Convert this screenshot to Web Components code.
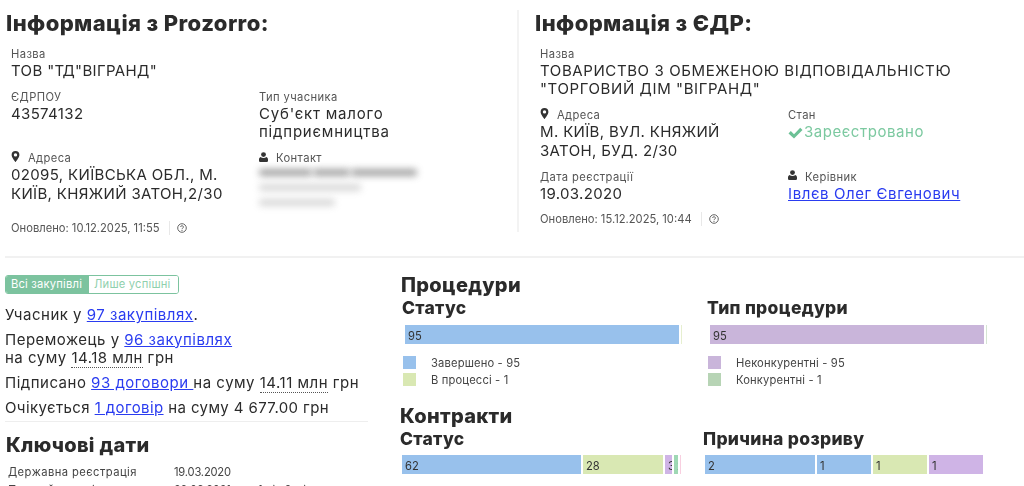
<!DOCTYPE html>
<html lang="uk"><head><meta charset="utf-8"><title>Профіль учасника</title>
<style>
html,body{margin:0;padding:0;background:#fff;height:486px;overflow:hidden}
body{font-family:Inter,"Open Sans",sans-serif;color:#2b2b2b;--ls:.35px}
</style></head><body>
<x-page>
  <x-top>
    <x-panel slot="left" title="Інформація з Prozorro:" updated="Оновлено: 10.12.2025, 11:55" gap="14">
      <x-field label="Назва" wide>ТОВ "ТД"ВІГРАНД"</x-field>
      <x-field label="ЄДРПОУ">43574132</x-field>
      <x-field label="Тип учасника" style="--ls:.8px">Суб'єкт малого підприємництва</x-field>
      <x-field label="Адреса" icon="pin">02095, КИЇВСЬКА ОБЛ., М. КИЇВ, КНЯЖИЙ ЗАТОН,2/30</x-field>
      <x-field label="Контакт" icon="user"><x-blurred></x-blurred></x-field>
    </x-panel>
    <x-panel slot="right" title="Інформація з ЄДР:" updated="Оновлено: 15.12.2025, 10:44" gap="9">
      <x-field label="Назва" wide style="--ls:.6px">ТОВАРИСТВО З ОБМЕЖЕНОЮ ВІДПОВІДАЛЬНІСТЮ "ТОРГОВИЙ ДІМ "ВІГРАНД"</x-field>
      <x-field label="Адреса" icon="pin">М. КИЇВ, ВУЛ. КНЯЖИЙ ЗАТОН, БУД. 2/30</x-field>
      <x-field label="Стан" style="--ls:.55px"><x-status>Зареєстровано</x-status></x-field>
      <x-field label="Дата реєстрації">19.03.2020</x-field>
      <x-field label="Керівник" icon="user" style="--ls:.6px"><a href="#" style="color:#2a3cf0">Івлєв Олег Євгенович</a></x-field>
    </x-panel>
  </x-top>
  <x-bottom>
    <x-summary slot="left"></x-summary>
    <x-charts slot="right"></x-charts>
  </x-bottom>
</x-page>
<script>
const ICONS={
 pin:'<svg width="9" height="11" viewBox="0 0 10 13"><path fill="#333" fill-rule="evenodd" d="M5 0a4.6 4.6 0 0 0-4.6 4.6C.4 7.6 5 13 5 13s4.6-5.4 4.6-8.4A4.6 4.6 0 0 0 5 0Zm0 6.6a2 2 0 1 1 0-4 2 2 0 0 1 0 4Z"/></svg>',
 user:'<svg width="9" height="10" viewBox="0 0 10 11"><circle cx="5" cy="2.8" r="2.7" fill="#333"/><path fill="#333" d="M1.8 5.5C.6 5.9 0 7 0 8.4V10c0 .5.4 1 1 1h8c.6 0 1-.5 1-1V8.4c0-1.4-.6-2.5-1.8-2.9C7.400 6.200 6.300 6.700 5 6.700S2.600 6.200 1.800 5.500Z"/></svg>'
};
function def(name,css,html){
 customElements.define(name,class extends HTMLElement{
  constructor(){super();this.attachShadow({mode:'open'})}
  connectedCallback(){
   const h=typeof html==='function'?html(this):html;
   this.shadowRoot.innerHTML='<style>'+css+'</style>'+h;
  }
 });
}
def('x-page',':host{display:block;width:1024px;height:486px;overflow:hidden;filter:blur(.3px)}','<slot></slot>');
def('x-top',`:host{display:flex;height:248px;padding-top:8px;margin-left:5px;border-bottom:2px solid #f1f1f1}
 .l{width:512px;flex:none}.r{flex:1;margin-top:2px;height:222px;border-left:2px solid #f3f3f3}`,
 '<div class="l"><slot name="left"></slot></div><div class="r"><slot name="right"></slot></div>');
def('x-panel',`:host{display:block}
 h2{margin:0;padding-left:1px;font:800 22px/30px Inter,sans-serif;color:#2b2b2b;letter-spacing:.4px}
 .grid{display:grid;grid-template-columns:248px 1fr;row-gap:9.5px;padding-left:6px;margin-top:9px}
 .up{display:flex;align-items:center;padding-left:6px;font-size:11.2px;line-height:14px;color:#555;letter-spacing:0}
 .sep{width:1px;height:14px;background:#e8e8e8;margin:0 7px 0 9px}
 svg{display:block}
 :host([slot=right]) h2{margin-top:-2px;padding-left:16px}
 :host([slot=right]) .grid{padding-left:21px}
 :host([slot=right]) .up{padding-left:21px}`,
 el=>`<h2>${el.getAttribute('title')}</h2><div class="grid"><slot></slot></div>
 <div class="up" style="margin-top:${el.getAttribute('gap')}px">${el.getAttribute('updated')}<span class="sep"></span>
 <svg width="10" height="10" viewBox="0 0 10 10"><circle cx="5" cy="5" r="4.3" fill="none" stroke="#555" stroke-width=".9"/><path d="M3.600 4a1.400 1.300 0 1 1 2 1.200C5.100 5.500 5 5.700 5 6.200" fill="none" stroke="#555" stroke-width=".9"/><circle cx="5" cy="7.500" r=".6" fill="#555"/></svg></div>`);
def('x-field',`:host{display:block;min-width:0}:host([wide]){grid-column:1/-1}
 .lb{display:flex;align-items:center;gap:8px;font-size:11.2px;line-height:14px;margin-bottom:1px;color:#555;letter-spacing:.4px}
 .lb svg{display:block;margin-top:-3px}
 .v{font-size:15px;line-height:18.4px;color:#2b2b2b;letter-spacing:var(--ls)}
 :host(:not([wide])) .v{max-width:215px}`,
 el=>`<div class="lb">${el.getAttribute('icon')?ICONS[el.getAttribute('icon')]:''}<span>${el.getAttribute('label')}</span></div><div class="v"><slot></slot></div>`);
def('x-blurred',`:host{display:block;height:38px;padding-top:3px}
 .r{display:flex;gap:1px;margin-bottom:8px}
 i{display:block;background:#8a8a8a;height:7px;border-radius:3px;filter:blur(3.6px);opacity:.8}
 .s{background:#a8a8a8;opacity:.45}`,
 '<div class="r"><i style="width:53px"></i><i style="width:37px"></i><i style="width:66px"></i></div><div class="r"><i class="s" style="width:102px"></i></div><div class="r"><i class="s" style="width:76px"></i></div>');
def('x-status',`:host{display:flex;align-items:center;gap:1px;color:#7cc9a0}`,
 '<svg width="15" height="12" viewBox="0 0 15 12"><path fill="#6cc196" d="M.5 6.400 2.800 4.100 6 7.300 12.200.8l2.300 2.300L6 11.500z"/></svg><slot></slot>');
def('x-bottom',`:host{display:flex;margin-left:5px}
 .l{width:363px;flex:none;margin-right:32px}.r{flex:1}`,
 '<div class="l"><slot name="left"></slot></div><div class="r"><slot name="right"></slot></div>');
def('x-toggle',`:host{display:inline-flex;height:19px;box-sizing:border-box;border:1.500px solid #7cc39f;border-radius:3px;font-size:11.2px;line-height:16px;overflow:hidden;letter-spacing:.2px}
 span{padding:0 5px;display:block}.a{background:#7cc39f;color:#fff;width:73px}.b{color:#8fd0ad;background:#fff;width:79px}`,
 '<span class="a">Всі закупівлі</span><span class="b">Лише успішні</span>');
def('x-summary',`:host{display:block;padding-top:14px;--ls:.5px}
 p{margin:0 0 6px;font-size:15px;line-height:18.700px;letter-spacing:var(--ls)}
 a{color:#2a3cf0}
 .d{border-bottom:1px dotted #555}
 .t{padding-top:12px}
 hr{border:0;border-top:1px solid #eee;margin:-3px 0 0}
 h3{margin:9.500px 0 0;padding-left:1px;font:800 20px/28px Inter,sans-serif;letter-spacing:.3px}
 table{border-collapse:collapse;margin-top:4px;font-size:11.200px;color:#444}
 td{padding:0 0 0 3px;height:18px}
 td:first-child{width:163px;letter-spacing:.45px}td:nth-child(2){width:81px;letter-spacing:-.2px}`,
 `<x-toggle></x-toggle>
 <div class="t"></div>
 <p>Учасник у <a href="#">97 закупівлях</a>.</p>
 <p>Переможець у <a href="#">96 закупівлях</a><br>на суму <span class="d">14.18 млн</span> грн</p>
 <p>Підписано <a href="#">93 договори </a>на суму <span class="d">14.11 млн</span> грн</p>
 <p style="--ls:.4px">Очікується <a href="#">1 договір</a> на суму 4 677.00 грн</p>
 <hr>
 <h3>Ключові дати</h3>
 <table><tr><td>Державна реєстрація</td><td>19.03.2020</td><td></td></tr><tr><td>Перший договір</td><td>22.06.2021</td><td>1 рік 3 міс.</td></tr></table>`);
def('x-bar',`:host{display:flex;height:21px;width:var(--w,276px)}
 div{box-sizing:border-box;border:1px solid #fff;font-size:11.200px;line-height:22px;padding-left:3px;overflow:hidden;color:#333;flex:none}
 .thin{padding:0;border-width:1px 0 1px 1px;width:2px}`,
 el=>JSON.parse(el.getAttribute('data')).map(([w,c,t])=>`<div ${w<3?'class="thin"':''} style="width:${w}px;background:${c}">${t}</div>`).join(''));
def('x-legend',`:host{display:block;margin-top:9px}
 .r{display:flex;height:17px;align-items:center;font-size:11.200px;color:#444;letter-spacing:.15px}
 i{width:13px;height:13px;margin-right:15px;flex:none}`,
 el=>JSON.parse(el.getAttribute('data')).map(([c,t])=>`<div class="r"><i style="background:${c}"></i>${t}</div>`).join(''));
def('x-chart',`:host{display:block}
 h4{margin:0;font:800 17.500px/22px Inter,sans-serif;letter-spacing:.3px}
 .body{margin-top:5px}`,
 el=>`<h4>${el.getAttribute('title')}</h4><div class="body"><slot></slot></div>`);
def('x-charts',`:host{display:block;padding-top:16px}
 h3{margin:0;font:800 20px/23px Inter,sans-serif;letter-spacing:.3px}
 .g{display:flex}
 .a{width:305px;flex:none}`,
 `<h3 style="margin-left:1px">Процедури</h3>
 <div class="g" style="height:108px">
  <div class="a" style="padding-left:2px;box-sizing:border-box"><x-chart title="Статус">
    <div style="margin-left:2px"><x-bar data='[[276,"#98c1ec","95"],[2,"#e6efd0",""]]'></x-bar>
    <x-legend style="margin-left:-1px" data='[["#98c1ec","Завершено - 95"],["#d9e8b3","В процессі - 1"]]'></x-legend></div></x-chart></div>
  <div style="padding-left:2px"><x-chart title="Тип процедури">
    <div style="margin-left:2px"><x-bar data='[[276,"#c9b5da","95"],[2,"#d5e5d3",""]]'></x-bar>
    <x-legend style="margin-left:-1px" data='[["#c9b5da","Неконкурентні - 95"],["#b7d4b5","Конкурентні - 1"]]'></x-legend></div></x-chart></div>
 </div>
 <h3>Контракти</h3>
 <div class="g">
  <div class="a"><x-chart title="Статус"><div style="margin:-1px 0 0 1px"><x-bar data='[[181,"#98c1ec","62"],[82,"#d9e8b3","28"],[9,"#cfb4e6","3"],[6,"#9ed8b4","2"],[2,"#f8cfe0",""]]'></x-bar></div></x-chart></div>
  <div style="margin-left:-2px"><x-chart title="Причина розриву"><div style="margin:-1px 0 0 1px"><x-bar data='[[112,"#98c1ec","2"],[56,"#98c1ec","1"],[56,"#d9e8b3","1"],[56,"#cfb4e6","1"]]'></x-bar></div></x-chart></div>
 </div>`);
</script>
</body></html>
